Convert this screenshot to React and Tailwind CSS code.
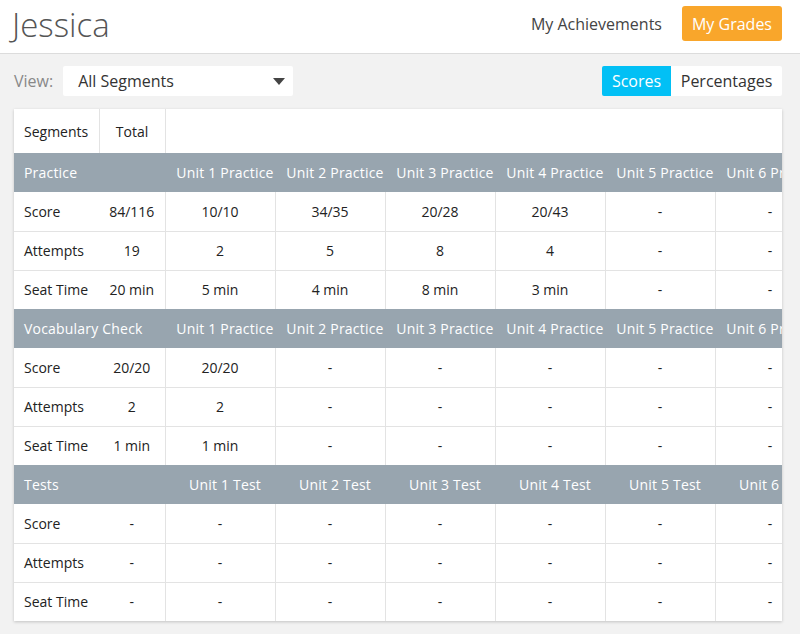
import clsx from 'clsx'

const units = [1, 2, 3, 4, 5, 6]

const sections = [
  {
    title: 'Practice',
    col: (n) => `Unit ${n} Practice`,
    rows: [
      { label: 'Score', total: '84/116', vals: ['10/10', '34/35', '20/28', '20/43', '-', '-'] },
      { label: 'Attempts', total: '19', vals: ['2', '5', '8', '4', '-', '-'] },
      { label: 'Seat Time', total: '20 min', vals: ['5 min', '4 min', '8 min', '3 min', '-', '-'] },
    ],
  },
  {
    title: 'Vocabulary Check',
    col: (n) => `Unit ${n} Practice`,
    rows: [
      { label: 'Score', total: '20/20', vals: ['20/20', '-', '-', '-', '-', '-'] },
      { label: 'Attempts', total: '2', vals: ['2', '-', '-', '-', '-', '-'] },
      { label: 'Seat Time', total: '1 min', vals: ['1 min', '-', '-', '-', '-', '-'] },
    ],
  },
  {
    title: 'Tests',
    col: (n) => `Unit ${n} Test`,
    rows: [
      { label: 'Score', total: '-', vals: ['-', '-', '-', '-', '-', '-'] },
      { label: 'Attempts', total: '-', vals: ['-', '-', '-', '-', '-', '-'] },
      { label: 'Seat Time', total: '-', vals: ['-', '-', '-', '-', '-', '-'] },
    ],
  },
]

export default function App() {
  return (
    <div className="min-h-[634px] bg-[#f2f2f2] font-['Open_Sans',sans-serif]">
      {/* Header */}
      <header className="h-[54px] bg-white border-b border-[#dcdcdc] flex items-center justify-between pl-[12px] pr-[18px] pb-[6px]">
        <h1 className="text-[33px] font-light text-[#555] leading-none mt-[2px]">Jessica</h1>
        <div className="flex items-center gap-[20px]">
          <span className="text-[16px] text-[#444]">My Achievements</span>
          <button className="h-[35px] px-[10px] rounded-[3px] bg-[#f9a62b] text-white text-[16px]">
            My Grades
          </button>
        </div>
      </header>

      {/* Controls */}
      <div className="flex items-center justify-between pl-[14px] pr-[18px] pt-[12px] pb-[13px]">
        <div className="flex items-center gap-[10px]">
          <span className="text-[16px] text-[#888]">View:</span>
          <div className="w-[230px] h-[30px] bg-white rounded-[2px] flex items-center justify-between pl-[15px] pr-[8px]">
            <span className="text-[16px] text-[#333]">All Segments</span>
            <svg width="12" height="7" viewBox="0 0 12 7"><path d="M0 0h12L6 7z" fill="#444" /></svg>
          </div>
        </div>
        <div className="flex h-[30px] rounded-[2px] overflow-hidden text-[16px]">
          <span className="w-[69px] flex items-center justify-center bg-[#02c0f5] text-white">Scores</span>
          <span className="w-[111px] flex items-center justify-center bg-white text-[#333]">Percentages</span>
        </div>
      </div>

      {/* Table card */}
      <div className="mx-[14px] w-[768px] bg-white overflow-hidden shadow-[0_1px_3px_rgba(0,0,0,0.2)]">
        <table className="table-fixed border-collapse w-[811px] text-[14px] text-[#222]">
          <colgroup>
            <col className="w-[85px]" />
            <col className="w-[66px]" />
            {units.map((u) => <col key={u} className="w-[110px]" />)}
          </colgroup>
          <tbody>
            <tr className="h-[44px]">
              <td className="pl-[10px] border-r border-[#e3e3e3]">Segments</td>
              <td className="text-center border-r border-[#e3e3e3]">Total</td>
              <td colSpan={6}></td>
            </tr>
            {sections.map((s) => (
              <Section key={s.title} s={s} />
            ))}
          </tbody>
        </table>
      </div>
    </div>
  )
}

function Section({ s }) {
  return (
    <>
      <tr className="h-[39px] bg-[#98a5af] text-white tracking-[0.2px]">
        <td colSpan={2} className="pl-[10px] whitespace-nowrap">{s.title}</td>
        {units.map((u) => (
          <td key={u} className="pl-[10px] text-center whitespace-nowrap">{s.col(u)}</td>
        ))}
      </tr>
      {s.rows.map((r, i) => (
        <tr key={r.label} className={clsx('h-[39px]', i < 2 && 'border-b border-[#e3e3e3]')}>
          <td className="pl-[10px] whitespace-nowrap">{r.label}</td>
          <td className="text-center border-r border-[#e3e3e3] whitespace-nowrap">{r.total}</td>
          {r.vals.map((v, j) => (
            <td key={j} className="text-center border-r border-[#e3e3e3]">{v}</td>
          ))}
        </tr>
      ))}
    </>
  )
}
